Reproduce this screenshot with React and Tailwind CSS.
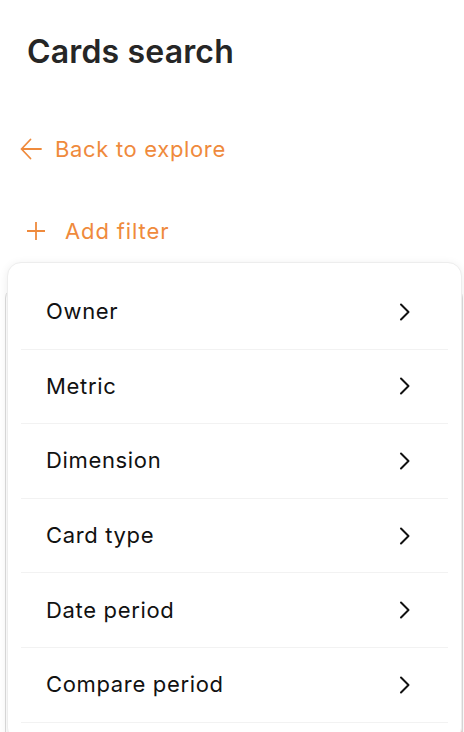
import React from 'react'

const items = ['Owner', 'Metric', 'Dimension', 'Card type', 'Date period', 'Compare period']

function Chevron() {
  return (
    <svg width="12" height="18" viewBox="0 0 12 18" fill="none" className="text-[#111]">
      <path d="M2 1.5 9.5 9 2 16.5" stroke="currentColor" strokeWidth="2" strokeLinecap="round" strokeLinejoin="round" />
    </svg>
  )
}

export default function App() {
  return (
    <div
      className="relative w-[464px] h-[732px] overflow-hidden bg-white"
      style={{ fontFamily: 'Inter, "Noto Sans", sans-serif' }}
    >
      <h1 className="pl-[27px] pt-[32px] text-[32px] leading-[40px] font-semibold text-[#262626] tracking-[0.005em]">
        Cards search
      </h1>

      {/* back link */}
      <div className="mt-[62px] pl-[20px] flex items-center gap-[13px] text-[#ef8a3c] h-[30px]">
        <svg width="22" height="22" viewBox="0 0 22 22" fill="none">
          <path d="M10.5 1.5 1.5 11l9 9.5M1.5 11H21" stroke="currentColor" strokeWidth="1.8" strokeLinecap="round" strokeLinejoin="round" />
        </svg>
        <span className="text-[22px] tracking-[0.03em]">Back to explore</span>
      </div>

      {/* add filter */}
      <div className="mt-[52px] pl-[27px] flex items-center gap-[20px] text-[#ef8a3c] h-[30px]">
        <svg width="18" height="18" viewBox="0 0 18 18" fill="none">
          <path d="M9 0v18M0 9h18" stroke="currentColor" strokeWidth="1.8" />
        </svg>
        <span className="text-[22px] tracking-[0.04em]">Add filter</span>
      </div>

      {/* content behind dropdown */}
      <div className="mt-[42px] ml-[5px] w-[458px] h-[460px] border border-[#dcdcdc] rounded-[10px] flex flex-col">
        <div className="h-[298px]" />
        <div className="flex-1 flex">
          <div className="flex-1" />
          <div className="w-[120px] bg-[#f1c4c4] border-t border-[#e79a9a]" />
        </div>
      </div>

      {/* dropdown */}
      <div className="absolute left-[7px] top-[262px] w-[455px] h-[480px] bg-white rounded-[14px] border border-[#ededed] shadow-[0_2px_10px_rgba(0,0,0,0.08)] pt-[12px]">
        {items.map((item) => (
          <div
            key={item}
            className="mx-[13px] h-[74.6px] border-b border-[#f2f2f2] flex items-center justify-between pl-[25px] pr-[37px]"
          >
            <span className="text-[22px] text-[#111] tracking-[0.03em]">{item}</span>
            <Chevron />
          </div>
        ))}
      </div>
    </div>
  )
}
